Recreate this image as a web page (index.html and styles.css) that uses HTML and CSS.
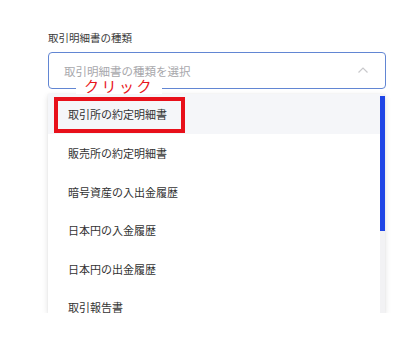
FILE: index.html
```html
<!DOCTYPE html>
<html lang="ja">
<head>
<meta charset="utf-8">
<link rel="stylesheet" href="styles.css">
</head>
<body>
<div class="page">
  <div class="field">
    <div class="label">取引明細書の種類</div>
    <div class="select">
      <span class="placeholder">取引明細書の種類を選択</span>
      <svg class="chev" width="12" height="8" viewBox="0 0 12 8"><path d="M1.5 6.5 L6 2 L10.5 6.5" fill="none" stroke="#c9c9cc" stroke-width="1.2"/></svg>
    </div>
    <div class="dropdown">
      <ul class="list">
        <li class="item active">取引所の約定明細書</li>
        <li class="item">販売所の約定明細書</li>
        <li class="item">暗号資産の入出金履歴</li>
        <li class="item">日本円の入金履歴</li>
        <li class="item">日本円の出金履歴</li>
        <li class="item">取引報告書</li>
      </ul>
      <div class="track"><div class="thumb"></div></div>
    </div>
    <div class="callout">クリック</div>
    <div class="mark"></div>
  </div>
</div>
</body>
</html>
```
FILE: styles.css
```css
html, body {
  margin: 0;
  padding: 0;
  background: #ffffff;
}
body {
  font-family: "Noto Sans CJK JP", "Noto Sans", sans-serif;
  color: #333333;
}
.page {
  padding: 31px 34px 0 48px;
}
.field {
  position: relative;
  width: 338px;
}
.label {
  font-size: 10.5px;
  line-height: 14px;
  color: #3a3a3a;
  margin-bottom: 7px;
}
.select {
  box-sizing: border-box;
  height: 37px;
  border: 1px solid #6286d3;
  border-radius: 4px;
  display: flex;
  align-items: center;
  justify-content: space-between;
  padding: 0 16px 0 15px;
}
.placeholder {
  font-size: 11.5px;
  color: #a8a8ac;
}
.chev {
  display: block;
  margin-top: -2px;
}
.dropdown {
  position: relative;
  margin-top: 5px;
  width: 337px;
  height: 219px;
  overflow: hidden;
  background: #ffffff;
  box-shadow: 0 2px 6px rgba(0, 0, 0, 0.13), 0 0 1px rgba(0, 0, 0, 0.08);
}
.list {
  list-style: none;
  margin: 0;
  padding: 0;
  margin-right: 5px;
}
.item {
  height: 38.5px;
  display: flex;
  align-items: center;
  padding-left: 20px;
  font-size: 11px;
  color: #333333;
}
.item.active {
  background: #f5f6f9;
  height: 40px;
}
.track {
  position: absolute;
  top: 0;
  right: 0;
  width: 5px;
  height: 100%;
  background: #f2f2f4;
}
.thumb {
  margin-top: 2px;
  height: 135px;
  background: #1f45e6;
}
.callout {
  position: absolute;
  left: 28px;
  top: 46px;
  width: 86px;
  height: 17px;
  background: #ffffff;
  color: #e8141b;
  font-size: 15px;
  line-height: 17px;
  letter-spacing: 2.5px;
  text-align: center;
}
.mark {
  position: absolute;
  left: 6px;
  top: 66px;
  width: 131px;
  height: 36px;
  box-sizing: border-box;
  border: 4px solid #e8101a;
}
```
